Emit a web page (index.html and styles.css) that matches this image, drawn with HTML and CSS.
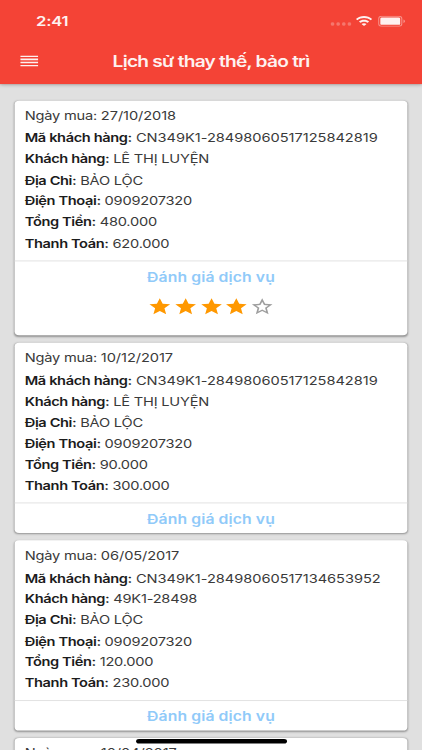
FILE: index.html
```
<!DOCTYPE html>
<html lang="vi">
<head>
<meta charset="utf-8">
<title>Lịch sử thay thế, bảo trì</title>
<link rel="stylesheet" href="styles.css">
</head>
<body>
<svg class="defs" width="0" height="0">
  <symbol id="star" viewBox="0 0 24 24"><path d="M12 17.27 18.18 21l-1.64-7.03L22 9.24l-7.19-.61L12 2 9.19 8.63 2 9.24l5.46 4.73L5.82 21z"/></symbol>
  <symbol id="star-empty" viewBox="0 0 24 24"><path d="M22 9.24l-7.19-.62L12 2 9.19 8.63 2 9.24l5.46 4.73L5.82 21 12 17.27 18.18 21l-1.63-7.03L22 9.24zM12 15.4l-3.76 2.27 1-4.28-3.32-2.88 4.38-.38L12 6.1l1.71 4.04 4.38.38-3.32 2.88 1 4.28L12 15.4z"/></symbol>
</svg>
<div class="screen">
  <header class="top">
    <div class="status">
      <span class="time">2:41</span>
      <div class="signals">
        <span class="dots"><i></i><i></i><i></i><i></i></span>
        <svg class="wifi" viewBox="0.8 0.2 14.4 11"><path d="M8 2.4c2.2 0 4.2.9 5.7 2.3l1.2-1.2C13 1.6 10.6.4 8 .4S3 1.6 1.1 3.5l1.2 1.2C3.8 3.3 5.8 2.4 8 2.4zM8 6.2c1.2 0 2.3.5 3.1 1.2l1.2-1.3C11.2 5 9.7 4.3 8 4.3S4.8 5 3.7 6.1l1.2 1.3C5.7 6.7 6.8 6.2 8 6.2zM10.1 8.6C9.5 8.1 8.8 7.8 8 7.8s-1.5.3-2.1.8L8 11z"/></svg>
        <svg class="battery" viewBox="0 0 25 12"><rect x=".5" y=".5" width="21" height="11" rx="2.7" fill="none" stroke="#fff" stroke-opacity=".45"/><rect x="2" y="2" width="18" height="8" rx="1.3" fill="#fff"/><path d="M23 4v4c.8-.3 1.3-1.1 1.3-2S23.8 4.3 23 4z" fill="#fff" fill-opacity=".5"/></svg>
      </div>
    </div>
    <div class="bar">
      <svg class="menu" viewBox="0 0 16 12"><path d="M0 .9h16M0 4.3h16M0 7.7h16M0 11.1h16"/></svg>
      <h1>Lịch sử thay thế, bảo trì</h1>
    </div>
  </header>
  <main class="list">
    <section class="card rated">
      <div class="info">
        <p class="date">Ngày mua: <span>27/10/2018</span></p>
        <p class="code"><b>Mã khách hàng:</b> CN349K1-28498060517125842819</p>
        <p><b>Khách hàng:</b> LÊ THỊ LUYỆN</p>
        <p><b>Địa Chỉ:</b> BẢO LỘC</p>
        <p><b>Điện Thoại:</b> 0909207320</p>
        <p><b>Tổng Tiền:</b> 480.000</p>
        <p><b>Thanh Toán:</b> 620.000</p>
      </div>
      <div class="rate">Đánh giá dịch vụ</div>
      <div class="stars">
        <svg><use href="#star"/></svg><svg><use href="#star"/></svg><svg><use href="#star"/></svg><svg><use href="#star"/></svg><svg class="empty"><use href="#star-empty"/></svg>
      </div>
    </section>
    <section class="card">
      <div class="info">
        <p class="date">Ngày mua: <span>10/12/2017</span></p>
        <p class="code"><b>Mã khách hàng:</b> CN349K1-28498060517125842819</p>
        <p><b>Khách hàng:</b> LÊ THỊ LUYỆN</p>
        <p><b>Địa Chỉ:</b> BẢO LỘC</p>
        <p><b>Điện Thoại:</b> 0909207320</p>
        <p><b>Tổng Tiền:</b> 90.000</p>
        <p><b>Thanh Toán:</b> 300.000</p>
      </div>
      <div class="rate">Đánh giá dịch vụ</div>
    </section>
    <section class="card">
      <div class="info">
        <p class="date">Ngày mua: <span>06/05/2017</span></p>
        <p class="code"><b>Mã khách hàng:</b> CN349K1-28498060517134653952</p>
        <p><b>Khách hàng:</b> 49K1-28498</p>
        <p><b>Địa Chỉ:</b> BẢO LỘC</p>
        <p><b>Điện Thoại:</b> 0909207320</p>
        <p><b>Tổng Tiền:</b> 120.000</p>
        <p><b>Thanh Toán:</b> 230.000</p>
      </div>
      <div class="rate">Đánh giá dịch vụ</div>
    </section>
    <section class="card last">
      <div class="info">
        <p class="date">Ngày mua: <span>10/04/2017</span></p>
      </div>
    </section>
  </main>
  <div class="home"></div>
</div>
</body>
</html>
```
FILE: styles.css
```
* { box-sizing: border-box; margin: 0; padding: 0; }

html, body { width: 422px; height: 750px; overflow: hidden; background: #e0e0e0; }

.defs { position: absolute; }

/* The 375x812 phone canvas is stretched to fill the 422x750 window. */
.screen {
  position: relative;
  width: 375px;
  height: 812px;
  overflow: hidden;
  display: flex;
  flex-direction: column;
  transform: scale(1.12533, .92365);
  transform-origin: 0 0;
  background: #e0e0e0;
  color: #3a3a3a;
  font-family: Inter, "Noto Sans", sans-serif;
  font-size: 13px;
}

.top {
  flex: none;
  height: 90.5px;
  background: #f44336;
  color: #fff;
  box-shadow: 0 1px 4px rgba(0, 0, 0, .4);
}

.status {
  height: 44px;
  padding: 1px 14px 0 32px;
  display: flex;
  justify-content: space-between;
  align-items: center;
}

.time { font-size: 14.8px; font-weight: 600; letter-spacing: -.2px; }

.status, .bar { opacity: .93; }
.signals { display: flex; align-items: center; margin-right: 1px; }
.dots { display: flex; gap: 1.5px; margin: 7px 4px 0 0; }
.dots i { width: 3.5px; height: 3.5px; border-radius: 50%; background: rgba(255, 255, 255, .3); }
.wifi { width: 15px; height: 11.8px; fill: #fff; margin-right: 4.2px; }
.battery { width: 24.5px; height: 12px; }

.bar { height: 44px; display: flex; align-items: center; }
.menu { width: 16px; height: 12px; margin-left: 17.7px; stroke: #fff; stroke-width: 1.7; }
.bar h1 { flex: 1; margin-right: 33.7px; text-align: center; font-size: 17px; font-weight: 600; letter-spacing: -.68px; }

.list { padding: 18px 13px 0; display: flex; flex-direction: column; gap: 8px; }

.card {
  flex: none;
  height: 205.8px;
  border-radius: 4px;
  background: #fff;
  box-shadow: 0 1px 2px rgba(0, 0, 0, .35);
}
.card.rated { height: 254.6px; }
.card.last { height: 20px; overflow: hidden; }

.info { height: 174px; padding: 5.2px 9px 0; border-bottom: 1px solid #e0e0e0; }
.info p { line-height: 22.65px; white-space: nowrap; letter-spacing: -.2px; }
.info .date { margin-bottom: 2px; }
.info .date span { letter-spacing: -.08px; }
.info .code { letter-spacing: -.03px; }
.info b { font-weight: 600; letter-spacing: -.35px; color: #1c1c1c; }

.rate { height: 33px; line-height: 34px; text-align: center; font-size: 14px; font-weight: 600; letter-spacing: .08px; color: #90caf9; }
.stars { display: flex; justify-content: center; gap: .6px; padding-top: 5.5px; }
.stars svg { width: 22px; height: 22px; fill: #ff9800; }
.stars .empty { fill: #9e9e9e; }

.home {
  position: absolute;
  left: 121px;
  bottom: 7.5px;
  width: 133.5px;
  height: 5px;
  border-radius: 3px;
  background: #000;
}
```
